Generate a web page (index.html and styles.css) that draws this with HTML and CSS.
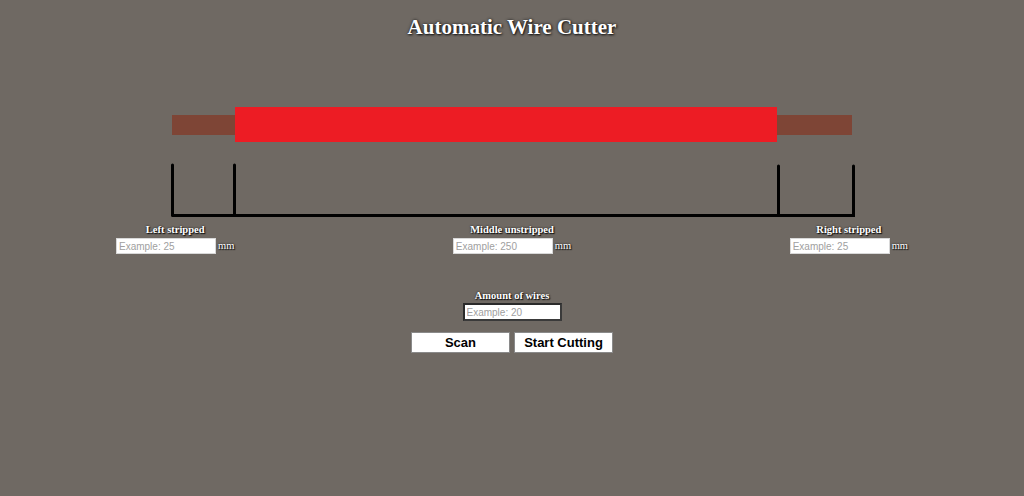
FILE: index.html
```html
<!DOCTYPE html>
<html>
<head>
<meta charset="utf-8">
<title>Automatic Wire Cutter</title>
<link rel="stylesheet" href="styles.css">
</head>
<body>
<h1 class="title">Automatic Wire Cutter</h1>
<svg class="diagram" width="1024" height="120" viewBox="0 0 1024 120">
  <rect x="172" y="15" width="64" height="20" fill="#7e4536"/>
  <rect x="776" y="15" width="76" height="20" fill="#7e4536"/>
  <rect x="235" y="7" width="542" height="35" fill="#ed1c24"/>
  <g stroke="#000" stroke-width="3" fill="none" stroke-linecap="round">
    <line x1="172.5" y1="65" x2="172.5" y2="115.5"/>
    <line x1="234.5" y1="65" x2="234.5" y2="115.5"/>
    <line x1="778.5" y1="66" x2="778.5" y2="115.5"/>
    <line x1="853.5" y1="66" x2="853.5" y2="115.5"/>
    <line x1="172" y1="115.5" x2="855" y2="115.5" stroke-linecap="butt"/>
  </g>
</svg>
<div class="fields">
  <div class="field">
    <div class="label">Left stripped</div>
    <div class="entry"><input class="box" type="text" placeholder="Example: 25"><span class="unit">mm</span></div>
  </div>
  <div class="field">
    <div class="label">Middle unstripped</div>
    <div class="entry"><input class="box" type="text" placeholder="Example: 250"><span class="unit">mm</span></div>
  </div>
  <div class="field">
    <div class="label">Right stripped</div>
    <div class="entry"><input class="box" type="text" placeholder="Example: 25"><span class="unit">mm</span></div>
  </div>
</div>
<div class="amount">
  <div class="label">Amount of wires</div>
  <input class="box box-dark" type="text" placeholder="Example: 20">
</div>
<div class="actions">
  <button class="btn">Scan</button>
  <button class="btn">Start Cutting</button>
</div>
</body>
</html>
```
FILE: styles.css
```css
html, body {
  margin: 0;
  padding: 0;
}
body {
  background: #6f6963;
  font-family: "Liberation Serif", "Times New Roman", serif;
  color: #fff;
  width: 1024px;
  height: 496px;
  overflow: hidden;
}
.title {
  margin: 15px 0 0;
  font-size: 21px;
  line-height: 24px;
  font-weight: bold;
  text-align: center;
  text-shadow: 0 0 3px #1a1a1a, 1px 1px 2px #1a1a1a;
}
.diagram {
  display: block;
  margin-top: 61px;
}
.fields {
  width: 792px;
  margin: 3px auto 0;
  display: flex;
  justify-content: space-between;
}
.field {
  display: flex;
  flex-direction: column;
  align-items: center;
  gap: 2px;
}
.label {
  font-size: 10.5px;
  line-height: 13px;
  font-weight: bold;
  text-align: center;
  text-shadow: 0 0 2px #111, 1px 1px 1px #111;
}
.entry {
  display: flex;
  align-items: center;
}
.box {
  box-sizing: border-box;
  width: 100px;
  height: 16px;
  border: 1px solid #d8d8d8;
  background: #fff;
  padding: 0 2px;
  margin: 0;
  font-family: "Liberation Sans", Arial, sans-serif;
  font-size: 10px;
  color: #333;
  outline: none;
}
.box::placeholder {
  color: #a0a0a0;
}
.unit {
  margin-left: 2px;
  font-size: 10.5px;
  line-height: 12px;
  text-shadow: 0 0 2px #111, 1px 1px 1px #111;
}
.amount {
  margin-top: 35px;
  display: flex;
  flex-direction: column;
  align-items: center;
  gap: 1px;
}
.box-dark {
  width: 99px;
  height: 18px;
  border: 2px solid #2a2a2a;
  border-right-color: #3a3a3a;
  border-bottom-color: #3a3a3a;
}
.actions {
  margin-top: 11px;
  display: flex;
  justify-content: center;
  gap: 4px;
}
.btn {
  box-sizing: border-box;
  width: 99px;
  height: 21px;
  margin: 0;
  padding: 0;
  background: #fff;
  border: 1px solid #8a8a8a;
  font-family: "Liberation Sans", Arial, sans-serif;
  font-size: 13px;
  font-weight: bold;
  color: #000;
}
```
